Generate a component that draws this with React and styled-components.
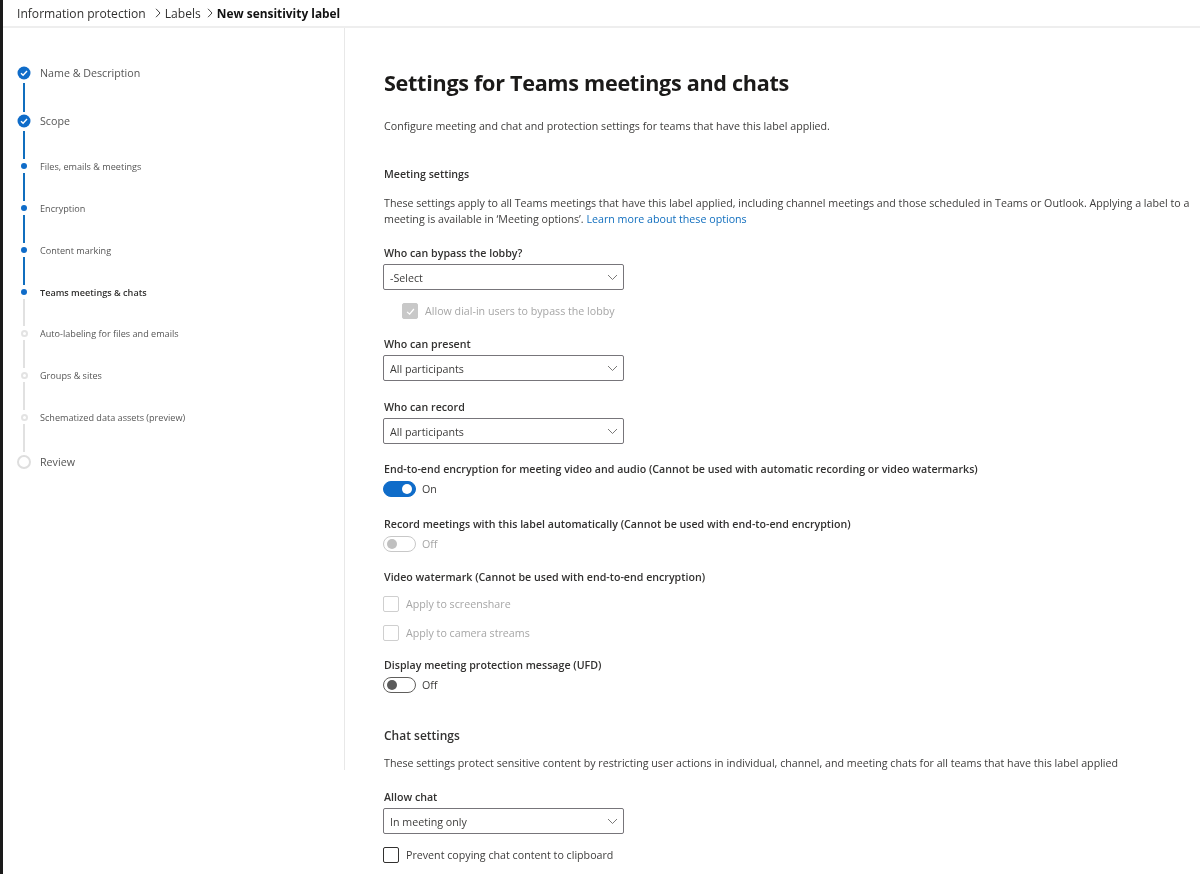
import React from "react";
import styled, { createGlobalStyle } from "styled-components";

const Global = createGlobalStyle`
  html, body { margin: 0; padding: 0; background: #fff; }
  body { font-family: "Open Sans", "Noto Sans", sans-serif; color: #323130; overflow: hidden; height: 874px; }
`;
const Page = styled.div`
  width: 1200px; height: 874px; box-sizing: border-box; border-left: 3px solid #1a1a1a; overflow: hidden; background: #fff;
  filter: blur(0.3px);
`;
const TopBar = styled.header`
  height: 28px; box-sizing: border-box; border-bottom: 2px solid #eeeeee; padding-left: 14px;
  display: flex; align-items: center; gap: 4px; font-size: 12.1px; color: #323130;
`;
const Crumb = styled.span`
  font-weight: ${p => (p.$current ? 700 : 400)};
  font-size: ${p => (p.$current ? 11.9 : 12.1)}px;
  color: ${p => (p.$current ? "#111" : "#323130")};
  white-space: nowrap;
`;
const CrumbSep = styled.span`display: flex; color: #444; margin-left: ${p => p.$ml}px;`;
const Body = styled.div`display: flex; align-items: flex-start;`;
const Sidebar = styled.nav`
  width: 342px; height: 742px; box-sizing: border-box; flex: none; border-right: 1px solid #e8e8e8; padding: 38px 0 0 14px;
`;
const Step = styled.div`
  display: flex; height: ${p => p.$h}px; gap: 9px;
`;
const MarkerCol = styled.div`
  width: 14px; flex: none; display: flex; flex-direction: column; align-items: center;
`;
const MarkerBox = styled.div`
  height: 14px; width: 14px; flex: none; display: flex; align-items: center; justify-content: center;
`;
const Line = styled.div`
  width: 2px; flex: 1; margin: ${p => p.$top}px 0 ${p => p.$bottom}px; background: ${p => (p.$on ? "#106ebe" : "#e1e1e1")};
`;
const Dot = styled.div`
  width: 6px; height: 6px; border-radius: 50%; background: #0f6cc9;
`;
const Ring = styled.div`
  width: 3px; height: 3px; border-radius: 50%; border: 2px solid #e3e3e3; background: #fff;
`;
const BigRing = styled.div`
  width: 10px; height: 10px; border-radius: 50%; border: 2px solid #dedede; background: #fff;
`;
const StepLabel = styled.div`
  font-size: ${p => (p.$big ? 10.7 : 9.1)}px; line-height: 14px; white-space: nowrap;
  padding-top: ${p => (p.$big ? 0 : 1)}px;
  font-weight: ${p => (p.$active ? 600 : 400)};
  color: ${p => (p.$active ? "#323130" : "#555")};
`;
const Main = styled.main`
  flex: 1; padding: 0 0 0 38px; min-width: 0;
`;
const Title = styled.h1`
  margin: 40px 0 0; padding-left: 1px; font-size: 21.6px; letter-spacing: -0.3px; line-height: 30px; font-weight: 700; color: #1b1a19; white-space: nowrap;
`;
const Text = styled.p`
  margin: ${p => p.$mt}px 0 0; padding-left: 1px; font-size: 10.68px; line-height: 16px; color: #3d3c3b; white-space: nowrap;
`;
const Link = styled.a`color: #106ebe; text-decoration: none;`;
const Label = styled.div`
  margin-top: ${p => p.$mt}px; padding-left: 1px; font-size: 10.65px; line-height: 16px; font-weight: 600; color: #323130; white-space: nowrap;
`;
const SectionTitle = styled.h2`
  margin: ${p => p.$mt}px 0 0; padding-left: 1px; font-size: 12px; line-height: 16px; font-weight: 600; color: #323130;
`;
const Select = styled.div`
  width: 241px; height: 26px; box-sizing: border-box; margin-top: 3px; border: 1px solid #77757a; border-radius: 2px;
  display: flex; align-items: center; justify-content: space-between; padding: 1px 5px 0 6px; font-size: 10.68px; color: #3d3c3b;
`;
const CheckRow = styled.div`
  display: flex; align-items: center; gap: 7px; height: 16px; margin: ${p => p.$mt}px 0 0 ${p => p.$indent ?? 0}px;
  font-size: 10.68px; color: ${p => (p.$disabled ? "#a6a6a6" : "#3d3c3b")}; white-space: nowrap;
`;
const Box = styled.div`
  width: 16px; height: 16px; box-sizing: border-box; border-radius: 2px; display: flex; align-items: center; justify-content: center; flex: none;
  background: ${p => (p.$filled ? "#c8c8c8" : "#fff")};
  border: 1px solid ${p => (p.$filled ? "#c8c8c8" : p.$disabled ? "#cfcfcf" : "#323130")};
`;
const ToggleRow = styled.div`
  display: flex; align-items: center; gap: 6px; height: 17px; margin-top: ${p => p.$mt}px; font-size: 10.68px;
  color: ${p => (p.$disabled ? "#a6a6a6" : "#3d3c3b")};
`;
const Track = styled.div`
  width: 33px; height: 16px; box-sizing: border-box; border-radius: 9px; display: flex; align-items: center; padding: 0 3px;
  justify-content: ${p => (p.$on ? "flex-end" : "flex-start")};
  background: ${p => (p.$on ? "#0f6cc9" : "#fff")};
  border: 1px solid ${p => (p.$on ? "#0f6cc9" : p.$disabled ? "#c8c8c8" : "#605e5c")};
`;
const Knob = styled.div`
  width: 10px; height: 10px; border-radius: 50%;
  background: ${p => (p.$on ? "#fff" : p.$disabled ? "#c0c0c0" : "#5a5a5a")};
`;

const Chevron = () => (
  <svg width="11" height="7" viewBox="0 0 11 7" fill="none" stroke="#6b6a69" strokeWidth="0.9"><path d="M1 1 5.5 5.5 10 1" /></svg>
);
const Caret = () => (
  <svg width="6" height="10" viewBox="0 0 6 10" fill="none" stroke="#444" strokeWidth="1"><path d="M1 .8 5 5 1 9.2" /></svg>
);
const Tick = ({ color = "#fff", size = 9 }) => (
  <svg width={size} height={size} viewBox="0 0 10 10" fill="none" stroke={color} strokeWidth="1.4"><path d="M1.2 5.4 4 8 8.8 2.2" /></svg>
);
const DoneMark = () => (
  <svg width="14" height="14" viewBox="0 0 14 14"><circle cx="7" cy="7" r="6.5" fill="#0f6cc9" /><path d="M4 7.2 6.1 9.2 10 5" fill="none" stroke="#fff" strokeWidth="1.4" /></svg>
);

const steps = [
  { t: "Name & Description", k: "done", h: 48, top: 3, bottom: 2, on: true },
  { t: "Scope", k: "done", h: 45, top: 3, bottom: 0, on: true },
  { t: "Files, emails & meetings", k: "dot", h: 42, top: 0, bottom: 0, on: true },
  { t: "Encryption", k: "dot", h: 42, top: 0, bottom: 0, on: true },
  { t: "Content marking", k: "dot", h: 42, top: 0, bottom: 0, on: true },
  { t: "Teams meetings & chats", k: "dot", h: 41, top: 0, bottom: 0, on: false, active: true },
  { t: "Auto-labeling for files and emails", k: "ring", h: 42, top: 0, bottom: 0, on: false },
  { t: "Groups & sites", k: "ring", h: 42, top: 0, bottom: 0, on: false },
  { t: "Schematized data assets (preview)", k: "ring", h: 45, top: 0, bottom: 3, on: false },
  { t: "Review", k: "big", h: 14 },
];

function Marker({ k }) {
  if (k === "done") return <DoneMark />;
  if (k === "dot") return <Dot />;
  if (k === "ring") return <Ring />;
  return <BigRing />;
}

export default function App() {
  return (
    <Page>
      <Global />
      <TopBar>
        <Crumb>Information protection</Crumb>
        <CrumbSep $ml={5}><Caret /></CrumbSep>
        <Crumb>Labels</Crumb>
        <CrumbSep $ml={2}><Caret /></CrumbSep>
        <Crumb $current>New sensitivity label</Crumb>
      </TopBar>
      <Body>
        <Sidebar>
          {steps.map((s, i) => (
            <Step key={s.t} $h={s.h}>
              <MarkerCol>
                <MarkerBox><Marker k={s.k} /></MarkerBox>
                {i < steps.length - 1 && <Line $on={s.on} $top={s.top} $bottom={s.bottom} />}
              </MarkerCol>
              <StepLabel $big={s.k === "done" || s.k === "big"} $active={s.active}>{s.t}</StepLabel>
            </Step>
          ))}
        </Sidebar>
        <Main>
          <Title>Settings for Teams meetings and chats</Title>
          <Text $mt={20}>Configure meeting and chat and protection settings for teams that have this label applied.</Text>
          <Label $mt={32}>Meeting settings</Label>
          <Text $mt={13}>
            These settings apply to all Teams meetings that have this label applied, including channel meetings and those scheduled in Teams or Outlook. Applying a label to a<br />
            meeting is available in ‘Meeting options’. <Link>Learn more about these options</Link>
          </Text>
          <Label $mt={18}>Who can bypass the lobby?</Label>
          <Select>-Select<Chevron /></Select>
          <CheckRow $mt={13} $indent={19} $disabled><Box $filled><Tick /></Box>Allow dial-in users to bypass the lobby</CheckRow>
          <Label $mt={17}>Who can present</Label>
          <Select>All participants<Chevron /></Select>
          <Label $mt={18}>Who can record</Label>
          <Select>All participants<Chevron /></Select>
          <Label $mt={17}>End-to-end encryption for meeting video and audio (Cannot be used with automatic recording or video watermarks)</Label>
          <ToggleRow $mt={3}><Track $on><Knob $on /></Track>On</ToggleRow>
          <Label $mt={19}>Record meetings with this label automatically (Cannot be used with end-to-end encryption)</Label>
          <ToggleRow $mt={3} $disabled><Track $disabled><Knob $disabled /></Track>Off</ToggleRow>
          <Label $mt={17}>Video watermark (Cannot be used with end-to-end encryption)</Label>
          <CheckRow $mt={11} $disabled><Box $disabled />Apply to screenshare</CheckRow>
          <CheckRow $mt={13} $disabled><Box $disabled />Apply to camera streams</CheckRow>
          <Label $mt={16}>Display meeting protection message (UFD)</Label>
          <ToggleRow $mt={3}><Track><Knob /></Track>Off</ToggleRow>
          <SectionTitle $mt={35}>Chat settings</SectionTitle>
          <Text $mt={11}>These settings protect sensitive content by restricting user actions in individual, channel, and meeting chats for all teams that have this label applied</Text>
          <Label $mt={18}>Allow chat</Label>
          <Select>In meeting only<Chevron /></Select>
          <CheckRow $mt={13}><Box />Prevent copying chat content to clipboard</CheckRow>
        </Main>
      </Body>
    </Page>
  );
}
